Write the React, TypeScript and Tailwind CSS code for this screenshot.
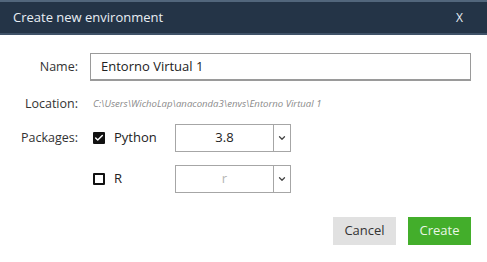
import { Check, ChevronDown } from "lucide-react";

function Select({ value, muted }: { value: string; muted?: boolean }) {
  return (
    <div className="flex h-[28px] w-[116px] border border-[#a6a6a6] bg-white">
      <div className={`flex flex-1 items-center justify-center text-[13px] ${muted ? "text-[#b5b5b5]" : "text-[#222]"}`}>
        {value}
      </div>
      <div className="flex w-[17px] items-center justify-center border-l border-[#a6a6a6]">
        <ChevronDown size={10} strokeWidth={3} className="text-[#444]" />
      </div>
    </div>
  );
}

export default function App() {
  return (
    <div className="h-[262px] w-[487px] bg-white font-['Open_Sans',sans-serif] text-[#333]">
      {/* ===== Header ===== */}
      <div className="flex h-[35px] items-center justify-between border-t-2 border-b-2 border-t-[#52667c] border-b-[#3f5268] bg-[#243447] pl-[13px] pr-[24px] text-[13px] text-[#e8eef4]">
        <span>Create new environment</span>
        <span className="text-[12px]">X</span>
      </div>

      {/* ===== Name ===== */}
      <div className="mt-[18px] flex items-center">
        <label className="w-[78px] text-right text-[12.5px] text-[#333]">Name:</label>
        <div className="ml-[12px] flex h-[28px] w-[381px] items-center border border-[#9a9a9a] border-b-2 pl-[10px] text-[13px] text-[#222]">
          Entorno Virtual 1
        </div>
      </div>

      {/* ===== Location ===== */}
      <div className="mt-[14px] flex items-center">
        <span className="w-[78px] text-right text-[12.5px] text-[#333]">Location:</span>
        <span className="ml-[15px] text-[9.6px] italic text-[#8a8a8a]">
          C:\Users\WichoLap\anaconda3\envs\Entorno Virtual 1
        </span>
      </div>

      {/* ===== Packages ===== */}
      <div className="mt-[10px] flex">
        <span className="mt-[5px] w-[78px] text-right text-[12.5px] text-[#333]">Packages:</span>
        <div className="ml-[15px] flex flex-col gap-[13px]">
          <div className="flex items-center">
            <div className="flex h-[12px] w-[12px] items-center justify-center rounded-[1px] bg-[#111]">
              <Check size={10} strokeWidth={3.5} className="text-white" />
            </div>
            <span className="ml-[9px] w-[61px] text-[13px] text-[#222]">Python</span>
            <Select value="3.8" />
          </div>
          <div className="flex items-center">
            <div className="h-[12px] w-[12px] rounded-[1px] border-2 border-[#111]" />
            <span className="ml-[9px] w-[61px] text-[13px] text-[#222]">R</span>
            <Select value="r" muted />
          </div>
        </div>
      </div>

      {/* ===== Actions ===== */}
      <div className="mt-[24px] flex justify-end gap-[12px] pr-[16px]">
        <button className="h-[28px] w-[63px] bg-[#e1e1e1] text-[13px] text-[#333]">Cancel</button>
        <button className="h-[28px] w-[63px] bg-[#43ae2b] text-[13px] text-[#eaf6e6]">Create</button>
      </div>
    </div>
  );
}
